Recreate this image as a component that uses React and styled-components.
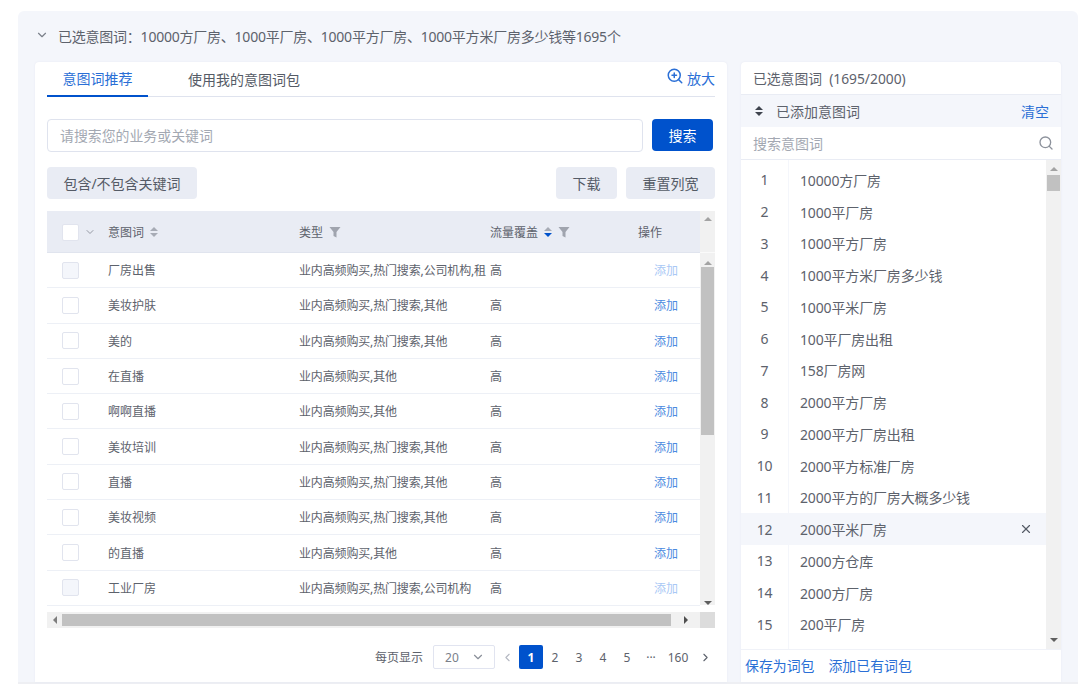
import React from "react";
import styled, { createGlobalStyle } from "styled-components";
import { ChevronDown, ChevronLeft, ChevronRight, Search, X, ZoomIn } from "lucide-react";

const Global = createGlobalStyle`
  html, body { margin: 0; padding: 0; background: #fff; }
  body {
    font-family: "Noto Sans", "Noto Sans CJK SC", sans-serif;
    color: #555b66;
  }
  * { box-sizing: border-box; }
`;

const Page = styled.div`
  width: 1080px;
  height: 684px;
  overflow: hidden;
  padding: 11px 2px 0 18px;
`;

const Panel = styled.div`
  height: 673px;
  background: #f4f6fb;
  border-radius: 6px 6px 0 0;
  border-bottom: 2px solid #eeeff3;
  padding: 0 0 0 17px;
`;

const Summary = styled.div`
  height: 51px;
  padding-bottom: 2px;
  display: flex;
  align-items: center;
  gap: 9px;
  font-size: 14px;
  letter-spacing: -0.23px;
  color: #5d626c;
  white-space: nowrap;
  svg { color: #7b808a; margin-top: -1px; }
`;

const Columns = styled.div`
  display: flex;
  gap: 14px;
  height: 620px;
`;

const Card = styled.div`
  background: #fff;
  border-radius: 4px 4px 0 0;
  box-shadow: 0 0 2px #e4e7f1;
  width: ${(p) => p.$width}px;
  display: flex;
  flex-direction: column;
`;

const LeftBody = styled(Card)`
  padding: 0 12px;
`;

const Tabs = styled.div`
  height: 35px;
  flex: none;
  display: flex;
  align-items: stretch;
  border-bottom: 1px solid #dfe3ee;
  position: relative;
`;

const Tab = styled.div`
  width: ${(p) => p.$width}px;
  font-size: 14px;
  display: flex;
  align-items: center;
  justify-content: ${(p) => (p.$active ? "center" : "flex-start")};
  padding: 0 0 1px ${(p) => (p.$active ? 0 : 40)}px;
  color: ${(p) => (p.$active ? "#2a6fd6" : "#555b66")};
  border-bottom: ${(p) => (p.$active ? "2px solid #0052cc" : "none")};
  margin-bottom: -1px;
  white-space: nowrap;
`;

const ZoomLink = styled.div`
  margin-left: auto;
  display: flex;
  align-items: center;
  gap: 3px;
  font-size: 14px;
  color: #2a6fd6;
  padding-bottom: 2px;
  svg { margin-top: -5px; }
`;

const SearchRow = styled.div`
  display: flex;
  margin-top: 22px;
  height: 33px;
`;

const SearchBox = styled.div`
  width: 596px;
  height: 33px;
  border: 1px solid #dfe3ee;
  border-radius: 4px;
  padding: 0 0 2px 12px;
  display: flex;
  align-items: center;
  font-size: 13.9px;
  color: #a3a8b2;
`;

const SearchButton = styled.button`
  width: 61px;
  height: 32px;
  margin-left: 9px;
  border: 0;
  border-radius: 4px;
  background: #0052cc;
  color: #fff;
  font: inherit;
  font-size: 14px;
  padding: 0;
`;

const ActionRow = styled.div`
  display: flex;
  gap: 9px;
  margin-top: 15px;
  height: 32px;
`;

const GreyButton = styled.button`
  width: ${(p) => p.$width}px;
  height: 32px;
  margin-right: ${(p) => p.$push || 0}px;
  border: 0;
  border-radius: 4px;
  background: #e9ecf4;
  color: #555b66;
  font: inherit;
  font-size: 14px;
  padding: 0;
`;

const TableWrap = styled.div`
  margin-top: 12px;
  display: flex;
  height: 394px;
`;

const TableMain = styled.div`
  width: 653px;
`;

const cols = "61px 191px 191px 110px 100px";

const HeadRow = styled.div`
  height: 42px;
  padding-top: 1px;
  display: grid;
  grid-template-columns: ${cols};
  align-items: center;
  background: #e9ecf4;
  border-bottom: 1px solid #e0e4ee;
  font-size: 12px;
  color: #5d626c;
`;

const HeadCell = styled.div`
  display: flex;
  align-items: center;
  gap: ${(p) => p.$gap ?? 6}px;
  padding-left: ${(p) => p.$pad || 0}px;
  white-space: nowrap;
`;

const Row = styled.div`
  height: 35.3px;
  display: grid;
  grid-template-columns: ${cols};
  align-items: center;
  border-bottom: 1px solid #edf0f6;
  font-size: 12px;
  color: #5d626c;
`;

const Cell = styled.div`
  white-space: nowrap;
  padding-left: ${(p) => p.$pad || 0}px;
`;

const TypeCell = styled(Cell)`
  letter-spacing: -0.15px;
`;

const Check = styled.span`
  display: block;
  width: 17px;
  height: 17px;
  margin-left: 15px;
  border: 1px solid #e1e4ee;
  border-radius: 2px;
  background: ${(p) => (p.$disabled ? "#f4f6fb" : "#fff")};
`;

const AddLink = styled.span`
  color: ${(p) => (p.$disabled ? "#a9c8f5" : "#4b8ae0")};
`;

const ScrollV = styled.div`
  width: 15px;
  background: #f1f1f1;
  display: flex;
  flex-direction: column;
  align-items: center;
`;

const ScrollHeadPart = styled.div`
  height: 42px;
  width: 100%;
  display: flex;
  justify-content: center;
  padding-top: 6px;
  border-bottom: 1px solid #fafafa;
  flex: none;
`;

const Arrow = styled.span`
  display: block;
  width: 0;
  height: 0;
  flex: none;
  border-style: solid;
  ${(p) =>
    p.$dir === "up" &&
    `border-width: 0 4px 4px 4px; border-color: transparent transparent ${p.$color || "#a3a3a3"} transparent;`}
  ${(p) =>
    p.$dir === "down" &&
    `border-width: 4px 4px 0 4px; border-color: ${p.$color || "#5f5f5f"} transparent transparent transparent;`}
  ${(p) =>
    p.$dir === "left" &&
    `border-width: 4px 4px 4px 0; border-color: transparent #7d7d7d transparent transparent;`}
  ${(p) =>
    p.$dir === "right" &&
    `border-width: 4px 0 4px 4px; border-color: transparent transparent transparent #4f4f4f;`}
`;

const ScrollTrack = styled.div`
  flex: 1;
  width: 100%;
  display: flex;
  flex-direction: column;
  align-items: center;
  padding-top: ${(p) => p.$top}px;
`;

const ThumbV = styled.div`
  width: 13px;
  height: ${(p) => p.$height}px;
  margin-top: ${(p) => p.$gap}px;
  background: #c1c1c1;
  flex: none;
`;

const ScrollBottom = styled.div`
  margin-top: auto;
  padding-bottom: ${(p) => p.$pad}px;
`;

const ScrollH = styled.div`
  margin-top: 7px;
  height: 16px;
  width: 668px;
  background: #f1f1f1;
  display: flex;
  align-items: center;
`;

const ArrowBox = styled.div`
  width: ${(p) => p.$width}px;
  height: 100%;
  display: flex;
  align-items: center;
  justify-content: center;
  flex: none;
  background: ${(p) => p.$bg || "transparent"};
`;

const ThumbH = styled.div`
  width: 609px;
  height: 12px;
  background: #c1c1c1;
  flex: none;
`;

const Pager = styled.div`
  margin-top: 17px;
  display: flex;
  align-items: center;
  height: 24px;
  padding-left: 328px;
  font-size: 12px;
  color: #5d626c;
  white-space: nowrap;
`;

const PageSize = styled.div`
  width: 62px;
  height: 24px;
  flex: none;
  margin-left: 10px;
  border: 1px solid #e1e4f0;
  border-radius: 2px;
  display: flex;
  align-items: center;
  justify-content: space-between;
  padding: 0 12px 0 11px;
  color: #7b808a;
  svg { color: #8a8f99; margin-right: -3px; }
`;

const PageItem = styled.div`
  width: ${(p) => p.$width || 24}px;
  height: 24px;
  display: flex;
  align-items: center;
  justify-content: center;
  flex: none;
  border-radius: 2px;
  background: ${(p) => (p.$active ? "#0052cc" : "transparent")};
  color: ${(p) => (p.$active ? "#fff" : "#5d626c")};
  font-weight: ${(p) => (p.$active ? 700 : 400)};
`;

const RightHead = styled.div`
  height: 33px;
  flex: none;
  padding: 0 12px 1px;
  display: flex;
  align-items: center;
  font-size: 13.8px;
  color: #5d626c;
  border-bottom: 1px solid #e9ecf4;
  white-space: pre;
`;

const SubHead = styled.div`
  height: 32px;
  flex: none;
  background: #f4f6fb;
  display: flex;
  align-items: center;
  padding: 0 12px 0 14px;
  gap: 13px;
  font-size: 14px;
  color: #5d626c;
`;

const SortIcon = styled.span`
  display: inline-flex;
  flex-direction: column;
  gap: 2px;
  flex: none;
`;

const ClearLink = styled.span`
  margin-left: auto;
  color: #2a6fd6;
`;

const FilterBox = styled.div`
  height: 33px;
  flex: none;
  display: flex;
  align-items: center;
  justify-content: space-between;
  padding: 0 7px 0 12px;
  font-size: 14px;
  color: #a3a8b2;
  border-bottom: 1px solid #e9ecf4;
  svg { color: #8d929c; }
`;

const ListArea = styled.div`
  height: 490px;
  flex: none;
  display: flex;
  border-bottom: 1px solid #f0f2f8;
`;

const WordList = styled.div`
  width: 305px;
  padding-top: 4px;
  background: linear-gradient(to right, #fff 47px, #f4f6fb 47px, #f4f6fb 48px, #fff 48px);
`;

const WordRow = styled.div`
  height: 31.75px;
  display: flex;
  align-items: center;
  font-size: 14px;
  letter-spacing: -0.15px;
  color: #5d626c;
  padding-right: 13px;
  background: ${(p) => (p.$hover ? "#f4f6fb" : "transparent")};
  svg { margin-left: auto; color: #555b66; }
`;

const WordIndex = styled.span`
  width: 47px;
  text-align: center;
  flex: none;
  margin-right: 12px;
`;

const Footer = styled.div`
  height: 30px;
  display: flex;
  align-items: center;
  gap: 14px;
  padding-left: 4px;
  font-size: 13.9px;
  color: #2a6fd6;
`;

const SortArrows = ({ top = "#a7abb5", bottom = "#a7abb5" }) => (
  <SortIcon>
    <Arrow $dir="up" $color={top} />
    <Arrow $dir="down" $color={bottom} />
  </SortIcon>
);

const FilterIcon = () => (
  <svg width="12" height="12" viewBox="0 0 12 12">
    <path d="M0.5 1h11L7.5 6v5.5l-3-1.5V6z" fill="#a0a4ae" />
  </svg>
);

const rows = [
  ["厂房出售", "业内高频购买,热门搜索,公司机构,租", true],
  ["美妆护肤", "业内高频购买,热门搜索,其他"],
  ["美的", "业内高频购买,热门搜索,其他"],
  ["在直播", "业内高频购买,其他"],
  ["啊啊直播", "业内高频购买,其他"],
  ["美妆培训", "业内高频购买,热门搜索,其他"],
  ["直播", "业内高频购买,热门搜索,其他"],
  ["美妆视频", "业内高频购买,热门搜索,其他"],
  ["的直播", "业内高频购买,其他"],
  ["工业厂房", "业内高频购买,热门搜索,公司机构", true],
];

const words = [
  "10000方厂房",
  "1000平厂房",
  "1000平方厂房",
  "1000平方米厂房多少钱",
  "1000平米厂房",
  "100平厂房出租",
  "158厂房网",
  "2000平方厂房",
  "2000平方厂房出租",
  "2000平方标准厂房",
  "2000平方的厂房大概多少钱",
  "2000平米厂房",
  "2000方仓库",
  "2000方厂房",
  "200平厂房",
];

export default function App() {
  return (
    <Page>
      <Global />
      <Panel>
        <Summary>
          <ChevronDown size={14} />
          已选意图词：10000方厂房、1000平厂房、1000平方厂房、1000平方米厂房多少钱等1695个
        </Summary>
        <Columns>
          <LeftBody $width={692}>
            <Tabs>
              <Tab $active $width={101}>意图词推荐</Tab>
              <Tab $width={180}>使用我的意图词包</Tab>
              <ZoomLink>
                <ZoomIn size={18} />
                放大
              </ZoomLink>
            </Tabs>
            <SearchRow>
              <SearchBox>请搜索您的业务或关键词</SearchBox>
              <SearchButton>搜索</SearchButton>
            </SearchRow>
            <ActionRow>
              <GreyButton $width={150} $push={350}>包含/不包含关键词</GreyButton>
              <GreyButton $width={61}>下载</GreyButton>
              <GreyButton $width={89}>重置列宽</GreyButton>
            </ActionRow>
            <TableWrap>
              <TableMain>
                <HeadRow>
                  <HeadCell $gap={5}>
                    <Check />
                    <ChevronDown size={12} color="#969aa4" />
                  </HeadCell>
                  <HeadCell>
                    意图词
                    <SortArrows />
                  </HeadCell>
                  <HeadCell>
                    类型
                    <FilterIcon />
                  </HeadCell>
                  <HeadCell>
                    流量覆盖
                    <SortArrows bottom="#0052cc" />
                    <FilterIcon />
                  </HeadCell>
                  <HeadCell $pad={38}>操作</HeadCell>
                </HeadRow>
                {rows.map(([word, type, disabled]) => (
                  <Row key={word}>
                    <Cell>
                      <Check $disabled={disabled} />
                    </Cell>
                    <Cell>{word}</Cell>
                    <TypeCell>{type}</TypeCell>
                    <Cell>高</Cell>
                    <Cell $pad={54}>
                      <AddLink $disabled={disabled}>添加</AddLink>
                    </Cell>
                  </Row>
                ))}
              </TableMain>
              <ScrollV>
                <ScrollHeadPart>
                  <Arrow $dir="up" />
                </ScrollHeadPart>
                <ScrollTrack $top={8}>
                  <Arrow $dir="up" />
                  <ThumbV $height={168} $gap={2} />
                  <ScrollBottom $pad={0}>
                    <Arrow $dir="down" />
                  </ScrollBottom>
                </ScrollTrack>
              </ScrollV>
            </TableWrap>
            <ScrollH>
              <ArrowBox $width={15}>
                <Arrow $dir="left" />
              </ArrowBox>
              <ThumbH />
              <ArrowBox $width={29}>
                <Arrow $dir="right" />
              </ArrowBox>
              <ArrowBox $width={15} $bg="#dcdcdc" />
            </ScrollH>
            <Pager>
              每页显示
              <PageSize>
                20
                <ChevronDown size={14} />
              </PageSize>
              <PageItem>
                <ChevronLeft size={13} color="#b4b8c2" />
              </PageItem>
              <PageItem $active>1</PageItem>
              <PageItem>2</PageItem>
              <PageItem>3</PageItem>
              <PageItem>4</PageItem>
              <PageItem>5</PageItem>
              <PageItem>···</PageItem>
              <PageItem $width={30}>160</PageItem>
              <PageItem>
                <ChevronRight size={13} />
              </PageItem>
            </Pager>
          </LeftBody>
          <Card $width={320}>
            <RightHead>已选意图词  (1695/2000)</RightHead>
            <SubHead>
              <SortArrows top="#3f444e" bottom="#3f444e" />
              已添加意图词
              <ClearLink>清空</ClearLink>
            </SubHead>
            <FilterBox>
              搜索意图词
              <Search size={16} />
            </FilterBox>
            <ListArea>
              <WordList>
                {words.map((word, i) => (
                  <WordRow key={word} $hover={i === 11}>
                    <WordIndex>{i + 1}</WordIndex>
                    {word}
                    {i === 11 && <X size={14} />}
                  </WordRow>
                ))}
              </WordList>
              <ScrollV>
                <ScrollTrack $top={7}>
                  <Arrow $dir="up" />
                  <ThumbV $height={16} $gap={4} />
                  <ScrollBottom $pad={7}>
                    <Arrow $dir="down" />
                  </ScrollBottom>
                </ScrollTrack>
              </ScrollV>
            </ListArea>
            <Footer>
              <span>保存为词包</span>
              <span>添加已有词包</span>
            </Footer>
          </Card>
        </Columns>
      </Panel>
    </Page>
  );
}
